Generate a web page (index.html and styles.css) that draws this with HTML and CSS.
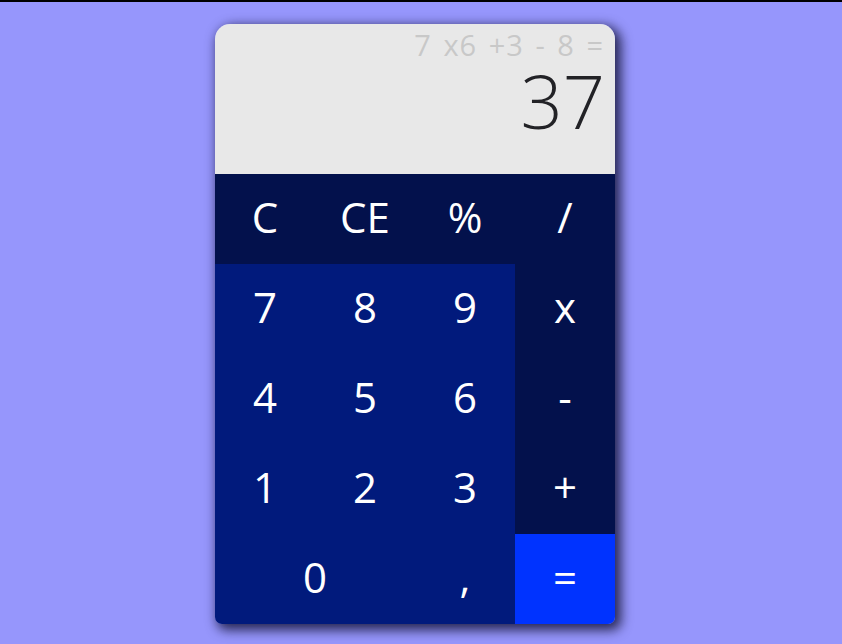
FILE: index.html
```html
<!DOCTYPE html>
<html>
<head>
<meta charset="utf-8">
<link rel="stylesheet" href="styles.css">
</head>
<body>
<div class="page">
  <div class="calc">
    <div class="display">
      <div class="expr">7 x6 +3 - 8 =</div>
      <div class="result">37</div>
    </div>
    <div class="keys">
      <div class="key op">C</div>
      <div class="key op">CE</div>
      <div class="key op">%</div>
      <div class="key op">/</div>
      <div class="key num">7</div>
      <div class="key num">8</div>
      <div class="key num">9</div>
      <div class="key op">x</div>
      <div class="key num">4</div>
      <div class="key num">5</div>
      <div class="key num">6</div>
      <div class="key op">-</div>
      <div class="key num">1</div>
      <div class="key num">2</div>
      <div class="key num">3</div>
      <div class="key op">+</div>
      <div class="key num zero">0</div>
      <div class="key num">,</div>
      <div class="key eq">=</div>
    </div>
  </div>
</div>
</body>
</html>
```

FILE: styles.css
```css
html, body {
  margin: 0;
  padding: 0;
  background: #9696fc;
  height: 100%;
}
body {
  border-top: 2px solid #000;
  box-sizing: border-box;
  font-family: "Open Sans", "DejaVu Sans", sans-serif;
}
.page {
  padding: 22px 0 0 215px;
}
.calc {
  width: 400px;
  border-radius: 15px 15px 7px 7px;
  overflow: hidden;
  box-shadow: 4px 4px 12px 2px rgba(10, 10, 40, 0.8);
}
.display {
  background: #e8e8e8;
  height: 150px;
  box-sizing: border-box;
  padding: 6px 11px 0 0;
  text-align: right;
}
.expr {
  font-size: 29px;
  line-height: 30px;
  letter-spacing: 1px;
  word-spacing: 3px;
  color: #c8c8c8;
}
.result {
  font-size: 74px;
  line-height: 60px;
  font-weight: 300;
  color: #222226;
  margin-top: 11px;
  margin-right: -1px;
}
.keys {
  display: grid;
  grid-template-columns: repeat(4, 100px);
  grid-auto-rows: 90px;
}
.key {
  display: flex;
  align-items: center;
  justify-content: center;
  color: #fff;
  font-size: 42px;
  padding-bottom: 6px;
  box-sizing: border-box;
}
.op {
  background: #03114c;
}
.num {
  background: #011a7c;
}
.eq {
  background: #0033ff;
}
.zero {
  grid-column: span 2;
}
```
